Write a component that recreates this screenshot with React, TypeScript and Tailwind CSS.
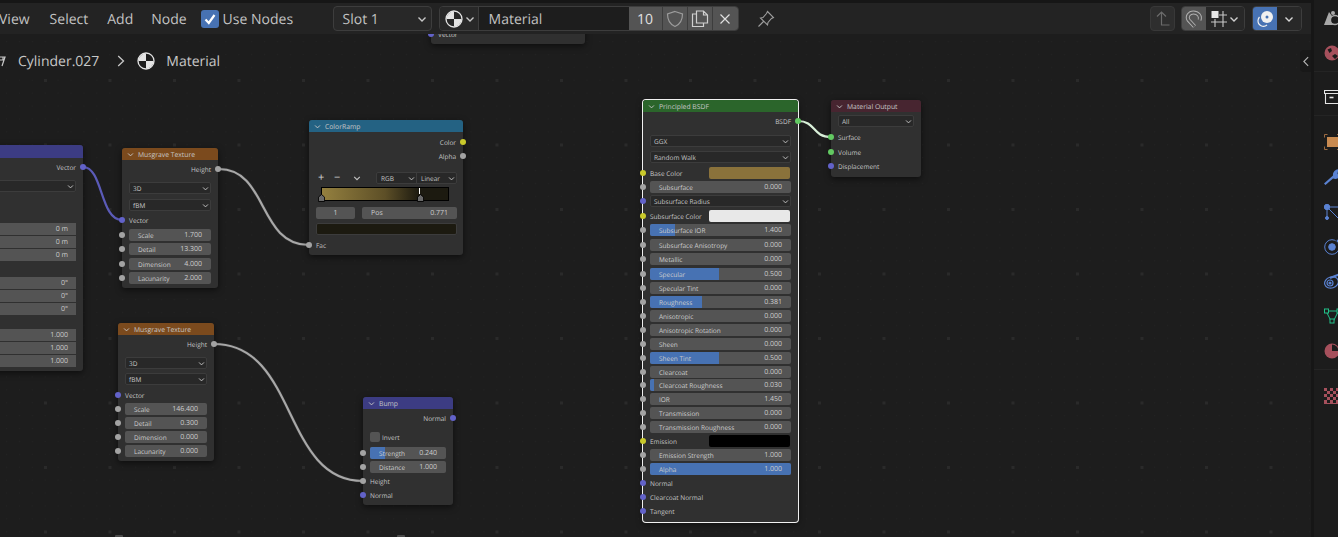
import React from "react";

const F = "font-['Open_Sans','Noto_Sans',sans-serif] [text-rendering:geometricPrecision]";
const T = "pt-[2px]";

function Chev({ c = "w-[8px] h-[8px] text-[#c4c4c4]" }: { c?: string }) {
  return (
    <svg viewBox="0 0 8 8" className={c + " shrink-0"} fill="none" stroke="currentColor" strokeWidth="1.1">
      <path d="M1.2 2.8 4 5.6 6.8 2.8" />
    </svg>
  );
}

function MatIcon({ c, fill = "#e4e4e4", dark = "#1d1d1d" }: { c: string; fill?: string; dark?: string }) {
  return (
    <svg viewBox="0 0 18 18" className={c}>
      <circle cx="9" cy="9" r="8" fill={dark} stroke={fill} strokeWidth="1.3" />
      <path d="M9 9V1.4A7.6 7.6 0 0 0 1.4 9Z" fill={fill} />
      <path d="M9 9v7.6A7.6 7.6 0 0 0 16.6 9Z" fill={fill} />
    </svg>
  );
}

const sockets: Record<string, string> = {
  gray: "bg-[#a3a3a3]",
  yellow: "bg-[#c9c92b]",
  blue: "bg-[#6262c9]",
  green: "bg-[#62c962]",
};

function Sock({ s, right }: { s: string; right?: boolean }) {
  return (
    <span
      className={
        "absolute top-1/2 -translate-y-1/2 w-[6px] h-[6px] rounded-full z-10 " +
        sockets[s] +
        (right ? " right-[-3px]" : " left-[-3px]")
      }
    />
  );
}

function Label({ cls = "", s, right, children }: { cls?: string; s: string; right?: boolean; children: React.ReactNode }) {
  return (
    <div className={"relative h-[14px] flex items-center px-[7px] text-[6.5px] whitespace-nowrap text-[#c6c6c6] " + (right ? "justify-end " : "") + cls}>
      <Sock s={s} right={right} />
      <span className={T}>{children}</span>
    </div>
  );
}

function Field({ cls = "", s, label, value, fill }: { cls?: string; s?: string; label: string; value: string; fill?: string }) {
  return (
    <div className={"relative h-[14px] flex items-center px-[7px] " + cls}>
      {s && <Sock s={s} />}
      <div className="relative flex-1 h-[12px] rounded-[2px] bg-[#545454] overflow-hidden flex items-center justify-between pl-[9px] pr-[9px] text-[#cdcdcd]">
        {fill && <span className={"absolute left-0 inset-y-0 bg-[#4772b3] " + fill} />}
        <span className={"relative whitespace-nowrap text-[6.5px] " + T}>{label}</span>
        <span className={"relative text-[7px] " + T}>{value}</span>
      </div>
    </div>
  );
}

function Drop({ cls = "", s, label }: { cls?: string; s?: string; label: string }) {
  return (
    <div className={"relative h-[12px] flex items-center px-[7px] " + cls}>
      {s && <Sock s={s} />}
      <div className="flex-1 h-[12px] rounded-[2px] bg-[#282828] border border-[#3c3c3c] flex items-center justify-between pl-[3px] pr-[1px] text-[6.5px] text-[#c6c6c6]">
        <span className={T}>{label}</span>
        <Chev c="w-[7px] h-[7px] text-[#c4c4c4]" />
      </div>
    </div>
  );
}

function ColorRow({ cls = "", label, color }: { cls?: string; label: string; color: string }) {
  return (
    <div className={"relative h-[14px] flex items-center pl-[7px] pr-[8px] text-[6.5px] text-[#c6c6c6] " + cls}>
      <Sock s="yellow" />
      <span className={"flex-1 whitespace-nowrap " + T}>{label}</span>
      <span className={"w-[81px] h-[12px] rounded-[2px] " + color} />
    </div>
  );
}

function Node({ cls, head, title, children }: { cls: string; head: string; title: string; children: React.ReactNode }) {
  return (
    <div className={"absolute rounded-[3px] bg-[#303030] shadow-[0_2px_6px_rgba(0,0,0,0.55)] " + cls}>
      <div className={"h-[12px] rounded-t-[3px] flex items-center pl-[5px] gap-[4px] text-[6.8px] text-[#c6c6c6] " + head}>
        <Chev c="w-[7px] h-[7px] text-[#c4c4c4]" />
        <span className={T}>{title}</span>
      </div>
      {children}
    </div>
  );
}

function Musgrave({ cls, gaps, vals }: { cls: string; gaps: string[]; vals: string[] }) {
  return (
    <Node cls={cls} head="bg-[#7b4a1d]" title="Musgrave Texture">
      <Label cls="mt-[2px]" s="gray" right>Height</Label>
      <Drop cls={gaps[0]} label="3D" />
      <Drop cls={gaps[1]} label="fBM" />
      <Label cls={gaps[2]} s="blue">Vector</Label>
      <Field cls={gaps[3]} s="gray" label="Scale" value={vals[0]} />
      <Field s="gray" label="Detail" value={vals[1]} />
      <Field cls={gaps[4]} s="gray" label="Dimension" value={vals[2]} />
      <Field s="gray" label="Lacunarity" value={vals[3]} />
    </Node>
  );
}

function BlockField({ value, cls = "" }: { value: string; cls?: string }) {
  return (
    <div className={"h-[12px] mb-px ml-[-20px] mr-[7px] bg-[#545454] flex items-center justify-end pr-[8px] text-[7px] text-[#cdcdcd] " + cls}>
      <span className={T}>{value}</span>
    </div>
  );
}

function Canvas() {
  return (
    <div className="relative flex-1 overflow-hidden bg-[#1d1d1d]">
      {/* grid */}
      <svg className="absolute inset-0 w-full h-full">
        <defs>
          <pattern id="minor" width="12.9" height="12.9" patternUnits="userSpaceOnUse" x="6" y="7">
            <rect width="1" height="1" fill="#232323" />
          </pattern>
          <pattern id="major" width="64.5" height="64.5" patternUnits="userSpaceOnUse" x="44" y="45">
            <rect width="3" height="3" fill="#2a2a2a" />
          </pattern>
        </defs>
        <rect width="100%" height="100%" fill="url(#minor)" />
        <rect width="100%" height="100%" fill="url(#major)" />
        <g transform="translate(0,-34)" fill="none" strokeLinecap="round">
          <path d="M83 167C103 167 100 220 122 220" stroke="#5b5bb8" strokeWidth="2.2" />
          <path d="M219 169C268 169 258 245 309 245" stroke="#2b2b2b" strokeWidth="3.5" />
          <path d="M219 169C268 169 258 245 309 245" stroke="#a8a8a8" strokeWidth="2.2" />
          <path d="M214 344C298 344 282 481 363 481" stroke="#2b2b2b" strokeWidth="3.5" />
          <path d="M214 344C298 344 282 481 363 481" stroke="#a8a8a8" strokeWidth="2.2" />
          <path d="M798 121C816 121 812 137 831 137" stroke="#d9f0d9" strokeWidth="2.2" />
        </g>
      </svg>

      {/* breadcrumbs */}
      <div className="absolute left-0 top-[16px] h-[22px] w-[240px] flex items-center text-[14px] text-[#c8c8c8]">
        <svg viewBox="0 0 8 14" className="w-[8px] h-[14px] ml-[-2px]" fill="none" stroke="#c8c8c8" strokeWidth="1.2">
          <path d="M1 3h6L4 12M5 3v3H2" />
        </svg>
        <span className="ml-[12px]">Cylinder.027</span>
        <svg viewBox="0 0 8 14" className="ml-[18px] w-[8px] h-[14px]" fill="none" stroke="#c8c8c8" strokeWidth="1.3">
          <path d="M1.2 2 6.5 7 1.2 12" />
        </svg>
        <MatIcon c="ml-[12px] w-[18px] h-[18px]" />
        <span className="ml-[11px]">Material</span>
      </div>

      {/* side collapse tab */}
      <div className="absolute right-0 top-[16px] w-[11px] h-[22px] rounded-l-[4px] bg-[#181818] flex items-center justify-center">
        <svg viewBox="0 0 7 12" className="w-[6px] h-[11px]" fill="none" stroke="#b4b4b4" strokeWidth="1.3">
          <path d="M6 1 1 6l5 5" />
        </svg>
      </div>

      {/* clipped node at top */}
      <div className="absolute left-[431px] top-[-20px] w-[154px] h-[30px] rounded-[3px] bg-[#303030] shadow-[0_2px_6px_rgba(0,0,0,0.55)]">
        <Label cls="top-[13px]" s="blue">Vector</Label>
      </div>

      {/* nodes cut off by the bottom edge */}
      <div className="absolute left-[115px] top-[501px] w-[8px] h-[2px] rounded-t-[1px] bg-[#4a4a4a]" />
      <div className="absolute left-[397px] top-[501px] w-[8px] h-[2px] rounded-t-[1px] bg-[#4a4a4a]" />

      {/* partially visible node on the left */}
      <Node cls="left-[-70px] top-[111px] w-[153px] pb-[3px]" head="bg-[#3c3c83] h-[13px]" title="">
        <Label cls="mt-[2px]" s="blue" right>Vector</Label>
        <div className="mt-[6px] mr-[7px] ml-[-20px] h-[12px] rounded-[2px] bg-[#282828] border border-[#3c3c3c] flex items-center justify-end pr-[1px]">
          <Chev c="w-[7px] h-[7px] text-[#c4c4c4]" />
        </div>
        <div className="mt-[31px]">
          <BlockField value="0 m" />
          <BlockField value="0 m" />
          <BlockField value="0 m" />
        </div>
        <div className="mt-[16px]">
          <BlockField value="0°" />
          <BlockField value="0°" />
          <BlockField value="0°" />
        </div>
        <div className="mt-[14px]">
          <BlockField value="1.000" />
          <BlockField value="1.000" />
          <BlockField value="1.000" />
        </div>
      </Node>

      <Musgrave
        cls="left-[122px] top-[114px] w-[96px] pb-[3px]"
        gaps={["mt-[6px]", "mt-[5px]", "mt-[2px]", "mt-px", "mt-px"]}
        vals={["1.700", "13.300", "4.000", "2.000"]}
      />
      <Musgrave
        cls="left-[118px] top-[289px] w-[96px] pb-[3px]"
        gaps={["mt-[6px]", "mt-[4px]", "mt-[3px]", "", ""]}
        vals={["146.400", "0.300", "0.000", "0.000"]}
      />

      {/* ColorRamp */}
      <Node cls="left-[309px] top-[86px] w-[154px] pb-[3px]" head="bg-[#246283]" title="ColorRamp">
        <Label cls="mt-[3px]" s="yellow" right>Color</Label>
        <Label s="gray" right>Alpha</Label>
        <div className="mt-[9px] h-[12px] flex items-center pl-[9px] pr-[6px] text-[#d0d0d0]">
          <span className="text-[11px] w-[16px]">+</span>
          <span className="text-[11px] w-[19px]">−</span>
          <Chev c="w-[8px] h-[8px] text-[#c4c4c4]" />
          <div className="ml-[15px] flex-1 h-[12px] flex rounded-[2px] bg-[#282828] border border-[#3c3c3c] text-[6.5px] text-[#c6c6c6]">
            <div className="w-[40px] flex items-center justify-between pl-[4px] pr-px border-r border-[#3c3c3c]">
              <span className={T}>RGB</span> <Chev c="w-[7px] h-[7px] text-[#c4c4c4]" />
            </div>
            <div className="flex-1 flex items-center justify-between pl-[4px] pr-px">
              <span className={T}>Linear</span> <Chev c="w-[7px] h-[7px] text-[#c4c4c4]" />
            </div>
          </div>
        </div>
        <div className="relative mt-[3px] ml-[12px] mr-[14px] h-[14px] border border-black bg-[linear-gradient(90deg,#94803f_0%,#5d4f27_50%,#1c1a10_77%,#1c1a10_100%)]">
          <svg viewBox="0 0 8 9" className="absolute left-[-4px] bottom-[-2px] w-[7px] h-[8px]">
            <path d="M.5 8.5V3.5L4 .5l3.5 3v5Z" fill="#6a6a6a" stroke="#000" strokeWidth="1" />
          </svg>
          <div className="absolute left-[77%] top-0 bottom-[6px] border-l border-dashed border-white" />
          <svg viewBox="0 0 8 9" className="absolute left-[75.500%] bottom-[-2px] w-[7px] h-[8px]">
            <path d="M.5 8.5V3.5L4 .5l3.5 3v5Z" fill="#6a6a6a" stroke="#000" strokeWidth="1" />
          </svg>
        </div>
        <div className="mt-[6px] pl-[7px] pr-[6px] flex gap-[7px] text-[7px] text-[#cdcdcd]">
          <div className="w-[39px] h-[12px] rounded-[2px] bg-[#545454] flex items-center justify-center">
            <span className={T}>1</span>
          </div>
          <div className="flex-1 h-[12px] rounded-[2px] bg-[#545454] flex items-center justify-between pl-[9px] pr-[9px]">
            <span className={T}>Pos</span>
            <span className={T}>0.771</span>
          </div>
        </div>
        <div className="mt-[4px] ml-[7px] mr-[6px] h-[12px] rounded-[2px] bg-[#1c1a10] border border-[#3c3c3c]" />
        <Label cls="mt-[3px]" s="gray">Fac</Label>
      </Node>

      {/* Bump */}
      <Node cls="left-[363px] top-[363px] w-[90px] pb-[3px]" head="bg-[#3c3c83]" title="Bump">
        <Label cls="mt-[2px]" s="blue" right>Normal</Label>
        <div className="mt-[5px] h-[14px] flex items-center gap-[2px] px-[7px] text-[6.5px] text-[#c6c6c6]">
          <span className="w-[10px] h-[10px] rounded-[2px] bg-[#545454]" />
          <span className={T}>Invert</span>
        </div>
        <Field cls="mt-[2px]" s="gray" label="Strength" value="0.240" fill="w-[20%]" />
        <Field s="gray" label="Distance" value="1.000" />
        <Label s="gray">Height</Label>
        <Label s="blue">Normal</Label>
      </Node>

      {/* Principled BSDF */}
      <Node cls="left-[643px] top-[66px] w-[155px] pb-[4px] ring-1 ring-[#f0f0f0]" head="bg-[#2b652b]" title="Principled BSDF">
        <Label cls="mt-[2px]" s="green" right>BSDF</Label>
        <Drop cls="mt-[7px]" label="GGX" />
        <Drop cls="mt-[4px]" label="Random Walk" />
        <ColorRow cls="mt-[3px]" label="Base Color" color="bg-[#8a723b]" />
        <Field s="gray" label="Subsurface" value="0.000" />
        <Drop cls="mt-px mb-[2px]" s="blue" label="Subsurface Radius" />
        <ColorRow label="Subsurface Color" color="bg-[#e8e8e8]" />
        <Field s="gray" label="Subsurface IOR" value="1.400" fill="w-[18%]" />
        <Field cls="mt-px" s="gray" label="Subsurface Anisotropy" value="0.000" />
        <Field s="gray" label="Metallic" value="0.000" />
        <Field cls="mt-px" s="gray" label="Specular" value="0.500" fill="w-[49%]" />
        <Field s="gray" label="Specular Tint" value="0.000" />
        <Field s="gray" label="Roughness" value="0.381" fill="w-[37%]" />
        <Field s="gray" label="Anisotropic" value="0.000" />
        <Field s="gray" label="Anisotropic Rotation" value="0.000" />
        <Field s="gray" label="Sheen" value="0.000" />
        <Field s="gray" label="Sheen Tint" value="0.500" fill="w-[49%]" />
        <Field cls="mb-[-1px]" s="gray" label="Clearcoat" value="0.000" />
        <Field s="gray" label="Clearcoat Roughness" value="0.030" fill="w-[3%]" />
        <Field s="gray" label="IOR" value="1.450" />
        <Field s="gray" label="Transmission" value="0.000" />
        <Field s="gray" label="Transmission Roughness" value="0.000" />
        <ColorRow label="Emission" color="bg-black" />
        <Field s="gray" label="Emission Strength" value="1.000" />
        <Field s="gray" label="Alpha" value="1.000" fill="w-full" />
        <Label s="blue">Normal</Label>
        <Label s="blue">Clearcoat Normal</Label>
        <Label s="blue">Tangent</Label>
      </Node>

      {/* Material Output */}
      <Node cls="left-[831px] top-[66px] w-[90px] pb-[4px]" head="bg-[#472530]" title="Material Output">
        <Drop cls="mt-[3px]" label="All" />
        <Label cls="mt-[3px]" s="green">Surface</Label>
        <Label cls="mt-px" s="green">Volume</Label>
        <Label s="blue">Displacement</Label>
      </Node>
    </div>
  );
}

function Header() {
  return (
    <div className="h-[31px] shrink-0 bg-[#232323] flex items-center text-[14px] text-[#c2c2c2] whitespace-nowrap">
      <span className={"ml-[-1px] " + T}>View</span>
      <span className={"ml-[20px] " + T}>Select</span>
      <span className={"ml-[19px] " + T}>Add</span>
      <span className={"ml-[18px] " + T}>Node</span>
      <span className="ml-[14px] w-[18px] h-[18px] rounded-[3px] bg-[#4772b3] flex items-center justify-center">
        <svg viewBox="0 0 14 14" className="w-[14px] h-[14px]" fill="none" stroke="#fff" strokeWidth="2.2">
          <path d="M2.5 7.5 5.8 11 11.5 3" />
        </svg>
      </span>
      <span className={"ml-[4px] w-[110px] " + T}>Use Nodes</span>

      <div className="w-[99px] h-[25px] rounded-[4px] bg-[#282828] border border-[#3d3d3d] flex items-center justify-between pl-[9px] pr-[4px]">
        <span className={T}>Slot 1</span>
        <Chev c="w-[10px] h-[10px] text-[#c8c8c8]" />
      </div>

      <div className="ml-[7px] w-[300px] h-[25px] rounded-[4px] border border-[#3d3d3d] flex overflow-hidden">
        <div className="w-[39px] bg-[#282828] flex items-center pl-[5px] gap-[2px] border-r border-[#3d3d3d]">
          <MatIcon c="w-[18px] h-[18px]" dark="#282828" />
          <Chev c="w-[10px] h-[10px] text-[#c8c8c8]" />
        </div>
        <div className="w-[150px] bg-[#1d1d1d] flex items-center pl-[10px]">
          <span className={T}>Material</span>
        </div>
        <div className="w-[34px] bg-[#545454] flex items-center justify-center border-r border-[#3d3d3d] text-[#e0e0e0]">
          <span className={T}>10</span>
        </div>
        <div className="w-[25px] bg-[#545454] flex items-center justify-center border-r border-[#3d3d3d]">
          <svg viewBox="0 0 18 18" className="w-[18px] h-[18px]" fill="none" stroke="#9c9c9c" strokeWidth="1.2">
            <path d="M9 1.5 16.5 4c0 6-1.5 10-7.5 12.5C3 14 1.5 10 1.5 4Z" />
          </svg>
        </div>
        <div className="w-[25px] bg-[#545454] flex items-center justify-center border-r border-[#3d3d3d]">
          <svg viewBox="0 0 18 18" className="w-[18px] h-[18px]" fill="none" stroke="#d0d0d0" strokeWidth="1.2">
            <path d="M5.5 4H1.5v12.5h11V13M5.5 1h7l4 4v8h-11Z M12.5 1v4h4" />
          </svg>
        </div>
        <div className="flex-1 bg-[#545454] flex items-center justify-center">
          <svg viewBox="0 0 12 12" className="w-[12px] h-[12px]" fill="none" stroke="#e0e0e0" strokeWidth="1.2">
            <path d="M1.5 1.5l9 9M10.5 1.5l-9 9" />
          </svg>
        </div>
      </div>

      <svg viewBox="0 0 18 18" className="ml-[18px] w-[18px] h-[18px]" fill="none" stroke="#9e9e9e" strokeWidth="1.1">
        <path d="M10.5 1.5 16.5 7.5 14.5 8.5 11 12.5 10.5 15 3.5 8 6 7.5 9.5 3.5ZM6.5 11.5 1.5 16.5" />
      </svg>

      <div className="ml-auto flex items-center mr-[9px]">
        <div className="w-[25px] h-[25px] rounded-[4px] bg-[#2e2e2e] border border-[#383838] flex items-center justify-center">
          <svg viewBox="0 0 18 18" className="w-[18px] h-[18px]" fill="none" stroke="#6b6b6b" strokeWidth="1.2">
            <path d="M3 6.5 7.5 2 12 6.5M7.5 2v13h8" />
          </svg>
        </div>
        <div className="ml-[6px] w-[64px] h-[25px] rounded-[4px] border border-[#3d3d3d] flex overflow-hidden">
          <div className="w-[24px] bg-[#545454] flex items-center justify-center">
            <svg viewBox="0 0 18 18" className="w-[18px] h-[18px]" fill="none">
              <path d="M9.500 16.500 3.500 10C1.500 6.500 4 2.500 8.500 2.500 13 2.500 16 6 14.500 10" stroke="#b0b0b0" strokeWidth="4" />
              <path d="M9.500 16.500 3.500 10C1.500 6.500 4 2.500 8.500 2.500 13 2.500 16 6 14.500 10" stroke="#545454" strokeWidth="2" />
            </svg>
          </div>
          <div className="flex-1 bg-[#282828] flex items-center pl-[4px] gap-[1px]">
            <svg viewBox="0 0 18 18" className="w-[18px] h-[18px]" fill="none" stroke="#c8c8c8" strokeWidth="1.1">
              <rect x="1.500" y="1" width="7" height="7" fill="#e8e8e8" stroke="none" />
              <path d="M9 5h8M1 12h16M5 9v8M13 1v16" />
            </svg>
            <Chev c="w-[10px] h-[10px] text-[#d0d0d0]" />
          </div>
        </div>
        <div className="ml-[7px] w-[50px] h-[25px] rounded-[4px] border border-[#3d3d3d] flex overflow-hidden">
          <div className="w-[24px] bg-[#4772b3] flex items-center justify-center">
            <svg viewBox="0 0 18 18" className="w-[18px] h-[18px]">
              <circle cx="11" cy="7" r="6" fill="#f0f0f0" />
              <circle cx="11" cy="7" r="1.500" fill="#4772b3" />
              <path d="M3.500 7A7 7 0 0 0 2 10.500a5.500 5.500 0 0 0 9 4.500" fill="none" stroke="#f0f0f0" strokeWidth="1.200" />
            </svg>
          </div>
          <div className="flex-1 bg-[#282828] flex items-center justify-center">
            <Chev c="w-[10px] h-[10px] text-[#d8d8d8]" />
          </div>
        </div>
      </div>
    </div>
  );
}

function Tabs() {
  const ic = "w-[18px] h-[16px] shrink-0";
  return (
    <div className="w-[24px] overflow-hidden bg-[#1c1c1c] flex flex-col pl-[10px] pt-[10px]">
      {/* scene */}
      <svg viewBox="0 0 18 16" className={ic}>
        <path d="M0 15 5 2l3 4 1 9Z" fill="#a8a8a8" />
        <circle cx="11" cy="10" r="4.500" fill="#1c1c1c" stroke="#a8a8a8" strokeWidth="1.300" />
        <circle cx="9" cy="3" r="2" fill="#a8a8a8" />
      </svg>
      {/* world */}
      <svg viewBox="0 0 18 16" className={"mt-[19px] " + ic}>
        <circle cx="8" cy="8" r="7.500" fill="#a6505c" />
        <path d="M3.500 4.500 7 3 8 6 5.500 8ZM8 11l3-2 3 2-3 3Z" fill="#1c1c1c" />
      </svg>
      <div className="mt-[10px] h-px w-[40px] ml-[-10px] bg-[#242424]" />
      {/* tool */}
      <svg viewBox="0 0 18 16" className={"mt-[17px] " + ic} fill="none" stroke="#e4e4e4" strokeWidth="1.100">
        <path d="M.5 1.500h18v3H.5ZM1.500 4.500v10H18" />
        <path d="M5.500 8.500h4" strokeWidth="1.600" />
      </svg>
      <div className="mt-[10px] h-px w-[40px] ml-[-10px] bg-[#242424]" />
      {/* object */}
      <svg viewBox="0 0 18 16" className={"mt-[18px] " + ic} fill="none" stroke="#9c6a40" strokeWidth="1">
        <rect x="3" y="3" width="11" height="10" fill="#c88a50" stroke="none" />
        <path d="M3.500 .5H.5v3M.5 12.500v3h3M13 .5h4M13 15.500h4" />
      </svg>
      {/* wrench */}
      <svg viewBox="0 0 18 16" className={"mt-[19px] " + ic}>
        <path d="M0 14.500 1.500 16 9 9.500c3 1 6.500 0 7.500-3L13.500 5l.5-3 3-1.500C13-1 8.500 2 9 6.500Z" fill="#5a82d2" />
      </svg>
      {/* particles */}
      <svg viewBox="0 0 18 16" className={"mt-[19px] " + ic} fill="none" stroke="#5a82d2" strokeWidth="1">
        <circle cx="3" cy="3" r="2.700" fill="#5a82d2" />
        <circle cx="3" cy="14" r="1.500" fill="#5a82d2" />
        <path d="M3 3v11M3 3l11 11M3 3h15" />
      </svg>
      {/* physics */}
      <svg viewBox="0 0 18 16" className={"mt-[19px] " + ic} fill="none" stroke="#5a82d2" strokeWidth="1">
        <circle cx="8" cy="8" r="7.300" />
        <circle cx="8" cy="8" r="3.300" fill="#5a82d2" />
        <circle cx="14" cy="2" r="2" fill="#5a82d2" stroke="#1c1c1c" />
      </svg>
      {/* constraints */}
      <svg viewBox="0 0 18 16" className={"mt-[18px] " + ic} fill="none" stroke="#5a82d2" strokeWidth="1.200">
        <ellipse cx="7.500" cy="9.500" rx="7" ry="5.500" transform="rotate(-18 7.500 9.500)" />
        <circle cx="6" cy="10" r="3" />
        <circle cx="6" cy="10" r="1" fill="#5a82d2" />
        <path d="M6 5 16 1" strokeWidth="2" />
      </svg>
      {/* data */}
      <svg viewBox="0 0 18 16" className={"mt-[19px] " + ic} fill="none" stroke="#20c088" strokeWidth="1">
        <path d="M2.500 4 7 13M2.500 3h12M14.500 3 9.500 13" />
        <rect x=".5" y="1" width="4" height="4" fill="#1c1c1c" />
        <rect x="13" y="1" width="4" height="4" fill="#1c1c1c" />
        <rect x="6" y="11" width="4" height="4" fill="#1c1c1c" />
      </svg>
      {/* material */}
      <svg viewBox="0 0 18 16" className={"mt-[19px] " + ic}>
        <circle cx="8" cy="8" r="7.500" fill="#a6505c" />
        <path d="M8 8V1.500A6.500 6.500 0 0 1 14.500 8Z" fill="#1c1c1c" />
      </svg>
      <div className="mt-[10px] h-px w-[40px] ml-[-10px] bg-[#242424]" />
      {/* texture */}
      <svg viewBox="0 0 18 16" className={"mt-[18px] " + ic}>
        <rect width="18" height="16" fill="#a6505c" />
        <path d="M3 0h3v3H3ZM9 0h3v3H9ZM15 0h3v3h-3ZM0 3h3v3H0ZM6 3h3v3H6ZM12 3h3v3h-3ZM3 6h3v3H3ZM9 6h3v3H9ZM15 6h3v3h-3ZM0 9h3v3H0ZM6 9h3v3H6ZM12 9h3v3h-3ZM3 12h3v3H3ZM9 12h3v3H9ZM15 12h3v3h-3Z" fill="#1c1c1c" />
      </svg>
    </div>
  );
}

export default function App() {
  return (
    <div className={"w-[1338px] h-[537px] overflow-hidden bg-[#161616] flex " + F}>
      <div className="w-[1311px] flex flex-col pt-[3px]">
        <Header />
        <Canvas />
      </div>
      <div className="ml-[3px] flex">
        <Tabs />
      </div>
    </div>
  );
}
